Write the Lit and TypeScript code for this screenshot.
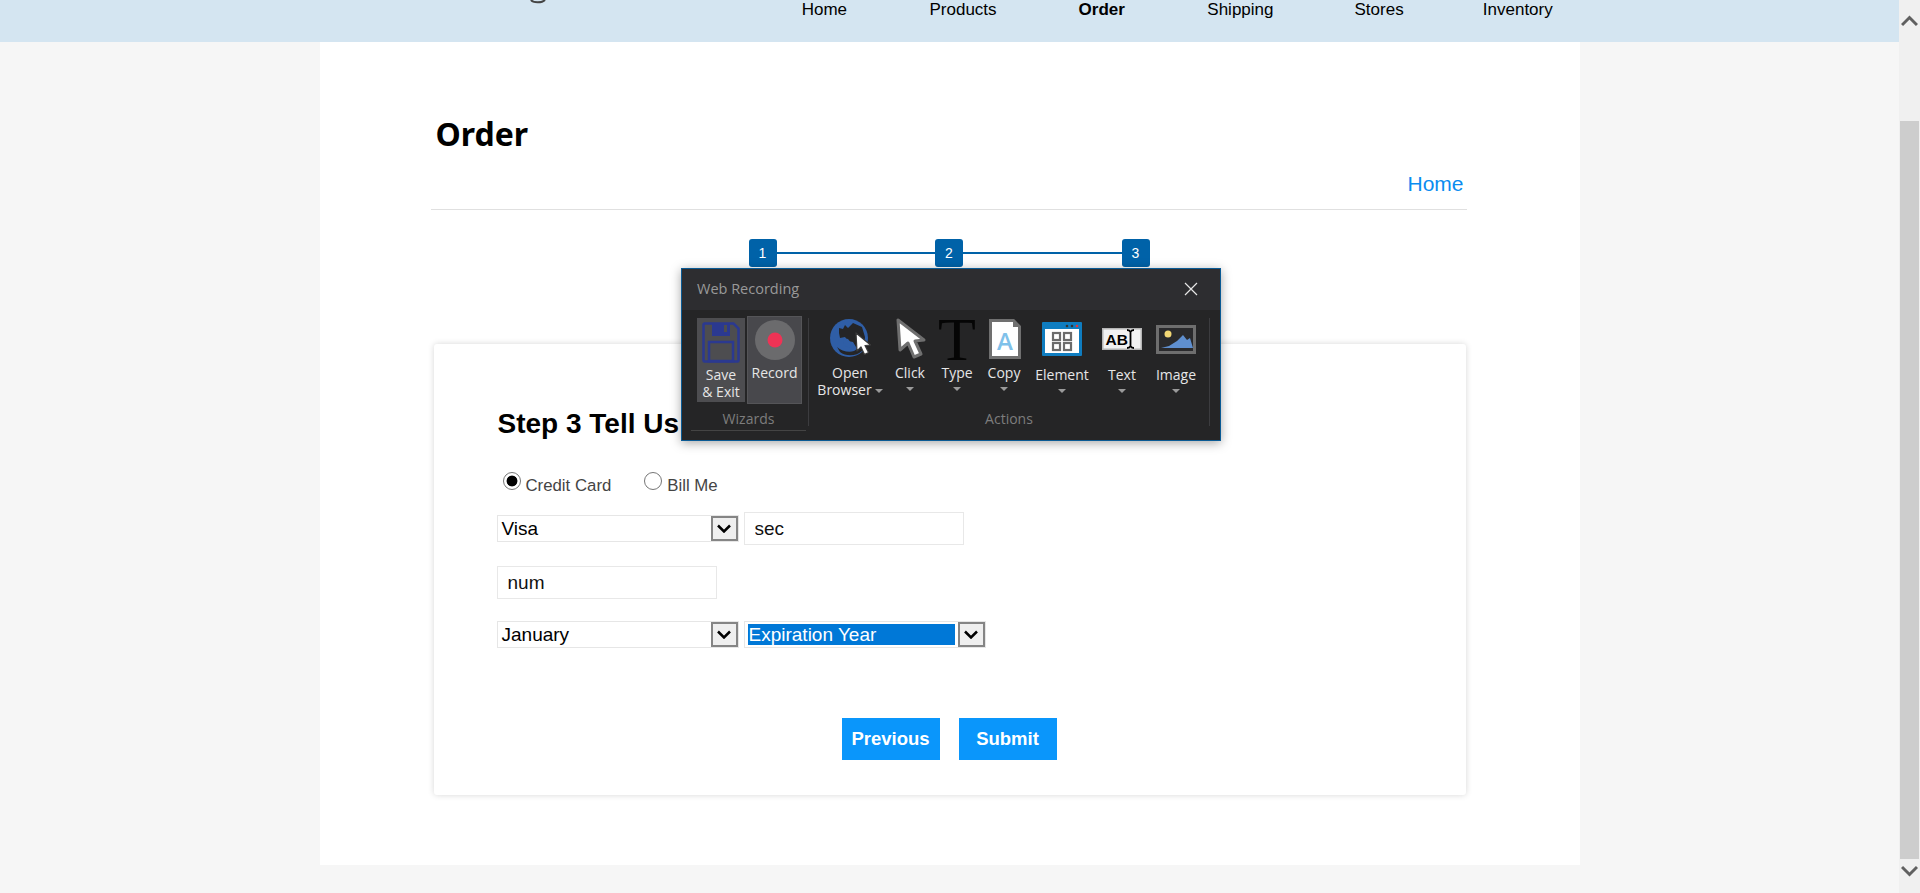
import { LitElement, html, css, svg } from "lit";
import { customElement } from "lit/decorators.js";

const navItems = ["Home", "Products", "Order", "Shipping", "Stores", "Inventory"];

const cursor = svg`<path d="M27 17l1 18 4-4 3.500 7.500 4-2-3.500-7 5.500-.5z" fill="#fff" stroke="#3a3a3a" stroke-width="1.200" stroke-linejoin="round"/>`;

const tools = [
  {
    label: html`Open<br />Browser<i class="caret inline"></i>`,
    cls: "",
    icon: html`<svg class="globe" width="42" height="46" viewBox="0 0 42 46">
      <circle cx="20" cy="22" r="19" fill="#2f5ea6" />
      <path d="M10 12l4 1 2-4 3 3 5-5 9 4 3 10-1 9-8 1-3-5-5-1-3-4-5 1-1-5z" fill="#252526" />
      <path d="M8 31c4 4 12 6 17 4l9-6-1 6c-5 5-16 6-22 1z" fill="#252526" />
      <path d="M14 22l5 1 4 5-3 4-5-3z" fill="#2f5ea6" />
      ${cursor}
    </svg>`,
  },
  {
    label: "Click",
    cls: "",
    icon: html`<svg width="32" height="44" viewBox="0 0 32 44">
      <path d="M4 3l2 30 8-7 6 14 7-3-6-13 9-1z" fill="#fff" stroke="#6f6f6f" stroke-width="3" stroke-linejoin="round" />
    </svg>`,
  },
  {
    label: "Type",
    cls: "",
    icon: html`<span class="big-t">T</span>`,
  },
  {
    label: "Copy",
    cls: "",
    icon: html`<svg class="doc" width="32" height="40" viewBox="0 0 32 40">
      <path d="M1.500 1.500h23l6 6v31h-29z" fill="#fff" stroke="#707070" stroke-width="3" />
      <path d="M24 1l7 7h-7z" fill="#707070" />
      <text x="16" y="31" text-anchor="middle" font-family="Open Sans, sans-serif" font-weight="600" font-size="24" fill="#7fc1ea">A</text>
    </svg>`,
  },
  {
    label: "Element",
    cls: "low",
    icon: html`<svg width="40" height="34" viewBox="0 0 40 34">
      <rect width="40" height="34" rx="1" fill="#0f7dc0" />
      <rect x="3" y="7" width="34" height="24" fill="#fff" />
      <circle cx="25" cy="4" r="1.300" fill="#333" />
      <circle cx="30" cy="4" r="1.300" fill="#333" />
      <circle cx="35" cy="4" r="1.300" fill="#e33" />
      <g fill="none" stroke="#6b6b6b" stroke-width="2.200">
        <rect x="11" y="11" width="7" height="7" />
        <rect x="22" y="11" width="7" height="7" />
        <rect x="11" y="21" width="7" height="7" />
        <rect x="22" y="21" width="7" height="7" />
      </g>
    </svg>`,
  },
  {
    label: "Text",
    cls: "low",
    icon: html`<svg width="40" height="22" viewBox="0 0 40 22">
      <rect width="40" height="22" fill="#b5b5b5" />
      <rect x="1.500" y="1.500" width="37" height="19" fill="#f2f2f2" />
      <text x="3.500" y="16.500" font-family="Liberation Sans, sans-serif" font-weight="700" font-size="15.500" fill="#000">AB</text>
      <path d="M25 2c2 0 3 .8 3.500 2 .5-1.200 1.500-2 3.500-2M28.500 4v14M25 20c2 0 3-.8 3.500-2 .5 1.200 1.500 2 3.500 2" fill="none" stroke="#000" stroke-width="1.800" />
    </svg>`,
  },
  {
    label: "Image",
    cls: "low",
    icon: html`<svg width="40" height="29" viewBox="0 0 40 29">
      <rect x="1.500" y="1.500" width="37" height="26" fill="#2a2a2c" stroke="#6e6e6e" stroke-width="3" />
      <circle cx="12" cy="9" r="3.500" fill="#f2d774" />
      <path d="M5 23l8-2 8-5 6-6 4 5 3-2 3 10z" fill="#5f8fcf" />
    </svg>`,
  },
];

@customElement("app-root")
export class AppRoot extends LitElement {
  static styles = css`
    :host {
      display: flex;
      position: relative;
      width: 1920px;
      height: 893px;
      overflow: hidden;
      background: #f6f6f6;
      font-family: "Liberation Sans", Arial, sans-serif;
      color: #000;
    }

    .main {
      flex: 1;
      min-width: 0;
    }

    /* top bar, scrolled so only its lower part shows */
    .nav {
      position: relative;
      display: flex;
      height: 42px;
      padding-left: 755px;
      background: #d4e5f1;
      font-size: 17px;
      line-height: 20px;
    }
    .nav a {
      width: 138.7px;
      text-align: center;
    }
    .nav a.active {
      font-weight: 700;
    }
    .logo-cut {
      position: absolute;
      left: 530px;
      top: 0;
    }

    .page {
      width: 1260px;
      height: 823px;
      margin: 0 auto;
      padding: 0 113px 0 111px;
      box-sizing: border-box;
      background: #fff;
    }
    h1 {
      margin: 0;
      padding: 68px 0 0 5px;
      font-family: "Noto Sans", "Open Sans", sans-serif;
      font-size: 32px;
      line-height: 48px;
      font-weight: 700;
    }
    .crumb {
      margin-top: 12px;
      padding: 0 3px 12px 0;
      border-bottom: 1px solid #e0e0e0;
      text-align: right;
      font-size: 21px;
      line-height: 27px;
      color: #0a8cf0;
    }

    .steps {
      display: flex;
      align-items: center;
      width: 401px;
      margin: 29px 0 0 318px;
    }
    .step {
      width: 28px;
      height: 28px;
      border-radius: 3px;
      background: #0062a8;
      color: #fff;
      font-size: 14px;
      line-height: 28px;
      text-align: center;
    }
    .line {
      flex: 1;
      height: 2px;
      background: #0062a8;
    }

    .card {
      height: 451px;
      margin: 77px 1px 0 3px;
      padding: 61px 0 0 63px;
      box-sizing: border-box;
      border-radius: 3px;
      background: #fff;
      box-shadow: 0 0 6px rgba(0, 0, 0, 0.16);
    }
    h2 {
      margin: 0 0 0 1px;
      font-size: 28px;
      line-height: 38px;
      font-weight: 700;
    }

    .radios {
      display: flex;
      margin: 29px 0 0 6px;
      height: 22px;
      font-size: 16.800px;
      line-height: 28px;
      color: #444;
    }
    .radio {
      display: flex;
      margin-right: 33px;
    }
    .dot {
      width: 18px;
      height: 18px;
      margin-right: 5px;
      box-sizing: border-box;
      border: 1.500px solid #767676;
      border-radius: 50%;
      background: #fff;
    }
    .dot.on {
      background: radial-gradient(circle, #000 0 5px, #fff 5.800px);
    }

    .row {
      display: flex;
      align-items: center;
      gap: 5px;
    }
    .r1 {
      margin-top: 18px;
    }
    .r2 {
      margin-top: 21px;
    }
    .r3 {
      margin-top: 22px;
    }

    .select {
      display: flex;
      width: 242px;
      height: 27px;
      box-sizing: border-box;
      border: 1px solid #e6e6e6;
      font-size: 19px;
      line-height: 25px;
    }
    .select .value {
      flex: 1;
      margin: 2px 3px;
      padding-left: 1px;
      line-height: 21px;
    }
    .select .value.picked {
      background: #0078d7;
      color: #fff;
    }
    .arrow {
      display: flex;
      align-items: center;
      justify-content: center;
      width: 27px;
      box-sizing: border-box;
      border: 2px solid #858585;
      background: #efefef;
    }

    .field {
      width: 220px;
      height: 33px;
      padding: 0 10px;
      box-sizing: border-box;
      border: 1.500px solid #e8e8e8;
      outline: none;
      font: 19px "Liberation Sans", Arial, sans-serif;
      color: #111;
      background: #fff;
    }

    .actions {
      display: flex;
      justify-content: center;
      gap: 19px;
      margin: 70px 64px 0 0;
    }
    .btn {
      height: 42px;
      min-width: 98px;
      box-sizing: border-box;
      background: #0a96fb;
      color: #fff;
      font-size: 18.500px;
      font-weight: 700;
      line-height: 42px;
      text-align: center;
    }

    /* browser scrollbar */
    .scrollbar {
      display: flex;
      flex-direction: column;
      align-items: center;
      width: 21px;
      background: #f0f0f0;
    }
    .sb-arrow {
      display: flex;
      align-items: center;
      justify-content: center;
      height: 121px;
      padding-bottom: 80px;
      box-sizing: border-box;
    }
    .sb-arrow.down {
      height: 34px;
      padding: 0 0 10px;
    }
    .thumb {
      width: 19px;
      height: 738px;
      background: #cdcdcd;
    }

    /* floating recorder toolbar */
    .recorder {
      position: absolute;
      left: 681px;
      top: 268px;
      width: 540px;
      height: 173px;
      box-sizing: border-box;
      border: 1px solid #0a5a94;
      background: #252526;
      box-shadow: 0 2px 10px rgba(0, 0, 0, 0.35);
      font-family: "Open Sans", "Noto Sans", sans-serif;
      font-size: 14px;
      line-height: 17px;
      color: #e6e6e6;
    }
    .title {
      display: flex;
      align-items: center;
      justify-content: space-between;
      height: 41px;
      padding: 0 22px 2px 15px;
      box-sizing: border-box;
      background: #2d2d30;
      color: #999;
      font-size: 14.500px;
    }
    .groups {
      display: flex;
      height: 130px;
    }
    .wizards {
      width: 115px;
      margin: 0 2px 0 9px;
    }
    .wiz-row {
      display: flex;
      align-items: flex-start;
      height: 93px;
      padding: 6px 0 0 6px;
      gap: 2px;
    }
    .save {
      width: 48px;
      height: 84px;
      margin-top: 2px;
      box-sizing: border-box;
      padding-top: 4px;
      background: #4d4d50;
      text-align: center;
    }
    .save svg,
    .rec svg {
      display: block;
      margin: 0 auto 4px;
    }
    .save svg {
      margin-bottom: 3px;
    }
    .rec {
      width: 55px;
      height: 88px;
      box-sizing: border-box;
      padding-top: 3px;
      border: 1px solid #555558;
      background: #48484c;
      text-align: center;
    }
    .group-name {
      color: #7d7d7d;
      font-size: 14px;
      line-height: 21px;
      text-align: center;
    }
    .wizards .group-name {
      margin-top: -1px;
      padding-bottom: 1px;
      border-bottom: 1px solid #444;
    }
    .sep {
      width: 1px;
      height: 108px;
      margin-top: 8px;
      background: #3c3c3f;
    }
    .actions-group {
      width: 400px;
    }
    .tool-row {
      display: grid;
      grid-template-columns: 76px 44px 50px 44px 72px 48px 60px;
      height: 93px;
      margin-left: 3px;
      padding-top: 6px;
      margin-bottom: -1px;
    }
    .tool {
      display: flex;
      flex-direction: column;
      align-items: center;
      text-align: center;
    }
    .tool .icon {
      display: flex;
      align-items: center;
      justify-content: center;
      height: 46px;
      margin-bottom: 2px;
    }
    .tool.low .icon {
      margin-bottom: 4px;
    }
    .globe {
      overflow: visible;
    }
    .doc {
      margin-left: 2px;
    }
    .big-t {
      font-family: "Liberation Serif", serif;
      font-size: 62px;
      line-height: 46px;
      color: #050505;
    }
    .caret {
      display: block;
      width: 0;
      height: 0;
      margin-top: 6px;
      border-left: 4px solid transparent;
      border-right: 4px solid transparent;
      border-top: 4px solid #9a9a9a;
    }
    .caret.inline {
      display: inline-block;
      margin: 0 0 2px 3px;
    }
  `;

  render() {
    return html`
      <div class="main">
        <nav class="nav">
          <svg class="logo-cut" width="16" height="4" viewBox="0 0 16 4">
            <path d="M1 0c2 3 11 3 14 0" fill="none" stroke="#444" stroke-width="2" />
          </svg>
          ${navItems.map(
            (item) => html`<a class=${item === "Order" ? "active" : ""}>${item}</a>`
          )}
        </nav>
        <div class="page">
          <h1>Order</h1>
          <div class="crumb">Home</div>
          <div class="steps">
            <div class="step">1</div>
            <div class="line"></div>
            <div class="step">2</div>
            <div class="line"></div>
            <div class="step">3</div>
          </div>
          <div class="card">
            <h2>Step 3 Tell Us</h2>
            <div class="radios">
              <div class="radio"><span class="dot on"></span>Credit Card</div>
              <div class="radio"><span class="dot"></span>Bill Me</div>
            </div>
            <div class="row r1">
              ${this.renderSelect("Visa")}
              <input class="field" .value=${"sec"} />
            </div>
            <div class="row r2">
              <input class="field" .value=${"num"} />
            </div>
            <div class="row r3">
              ${this.renderSelect("January")} ${this.renderSelect("Expiration Year", true)}
            </div>
            <div class="actions">
              <div class="btn">Previous</div>
              <div class="btn">Submit</div>
            </div>
          </div>
        </div>
      </div>
      <div class="scrollbar">
        <div class="sb-arrow">
          <svg width="17" height="12" viewBox="0 0 17 12">
            <path d="M1 10l7.500-7.500 7.500 7.500" fill="none" stroke="#606060" stroke-width="3" />
          </svg>
        </div>
        <div class="thumb"></div>
        <div class="sb-arrow down">
          <svg width="17" height="12" viewBox="0 0 17 12">
            <path d="M1 2l7.500 7.500 7.500-7.500" fill="none" stroke="#606060" stroke-width="3" />
          </svg>
        </div>
      </div>
      ${this.renderRecorder()}
    `;
  }

  renderSelect(value: string, picked = false) {
    return html`<div class="select">
      <span class="value ${picked ? "picked" : ""}">${value}</span>
      <span class="arrow">
        <svg width="14" height="9" viewBox="0 0 14 9">
          <path d="M1 1.500l6 6 6-6" fill="none" stroke="#000" stroke-width="2.500" />
        </svg>
      </span>
    </div>`;
  }

  renderRecorder() {
    return html`<div class="recorder">
      <div class="title">
        <span>Web Recording</span>
        <svg width="14" height="14" viewBox="0 0 14 14">
          <path d="M1 1l12 12M13 1L1 13" stroke="#e6e6e6" stroke-width="1.200" />
        </svg>
      </div>
      <div class="groups">
        <div class="wizards">
          <div class="wiz-row">
            <div class="save">
              <svg width="38" height="41" viewBox="0 0 38 41">
                <path d="M1.500 2.500a1 1 0 0 1 1-1h29l5 5v32a1 1 0 0 1-1 1h-33a1 1 0 0 1-1-1z" fill="none" stroke="#2b3990" stroke-width="2.500" />
                <path d="M10 2h18v12H10z" fill="#2b3990" />
                <path d="M22 3h3v7h-3z" fill="#4d4d50" />
                <rect x="7" y="20" width="24" height="19" fill="none" stroke="#2b3990" stroke-width="2.500" />
              </svg>
              Save<br />&amp; Exit
            </div>
            <div class="rec">
              <svg width="40" height="40" viewBox="0 0 40 40">
                <circle cx="20" cy="20" r="20" fill="#6b6b6d" />
                <circle cx="20" cy="20" r="7.500" fill="#ee3355" />
              </svg>
              Record
            </div>
          </div>
          <div class="group-name">Wizards</div>
        </div>
        <div class="sep"></div>
        <div class="actions-group">
          <div class="tool-row">
            ${tools.map(
              (tool, i) => html`<div class="tool ${tool.cls}">
                <div class="icon">${tool.icon}</div>
                <div>${tool.label}</div>
                ${i === 0 ? "" : html`<i class="caret"></i>`}
              </div>`
            )}
          </div>
          <div class="group-name">Actions</div>
        </div>
        <div class="sep"></div>
      </div>
    </div>`;
  }
}
